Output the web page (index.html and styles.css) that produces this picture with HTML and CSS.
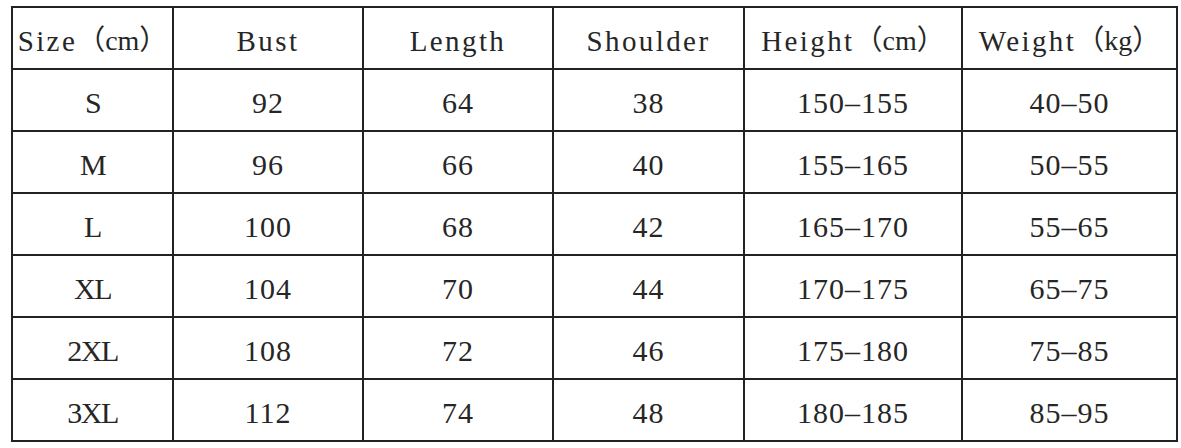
FILE: index.html
```html
<!DOCTYPE html>
<html>
<head>
<meta charset="utf-8">
<link rel="stylesheet" href="styles.css">
</head>
<body>
<table class="chart">
  <colgroup>
    <col class="c1"><col class="c2"><col class="c3"><col class="c4"><col class="c5"><col class="c6">
  </colgroup>
  <thead>
    <tr class="head">
      <th>Size<span class="fw">（cm）</span></th><th>Bust</th><th>Length</th><th>Shoulder</th><th>Height<span class="fw">（cm）</span></th><th>Weight<span class="fw">（kg）</span></th>
    </tr>
  </thead>
  <tbody>
    <tr><td class="size">S</td><td>92</td><td>64</td><td>38</td><td>150–155</td><td>40–50</td></tr>
    <tr><td class="size">M</td><td>96</td><td>66</td><td>40</td><td>155–165</td><td>50–55</td></tr>
    <tr><td class="size">L</td><td>100</td><td>68</td><td>42</td><td>165–170</td><td>55–65</td></tr>
    <tr><td class="size">XL</td><td>104</td><td>70</td><td>44</td><td>170–175</td><td>65–75</td></tr>
    <tr><td class="size">2XL</td><td>108</td><td>72</td><td>46</td><td>175–180</td><td>75–85</td></tr>
    <tr><td class="size">3XL</td><td>112</td><td>74</td><td>48</td><td>180–185</td><td>85–95</td></tr>
  </tbody>
</table>
</body>
</html>
```
FILE: styles.css
```css
html, body {
  margin: 0;
  padding: 0;
  background: #ffffff;
}
body {
  padding: 6px 0 0 11px;
}
.chart {
  border-collapse: collapse;
  table-layout: fixed;
  width: 1167px;
  border: 2px solid #222;
  color: #262626;
}
.c1 { width: 161px; }
.c2 { width: 190px; }
.c3 { width: 190px; }
.c4 { width: 191px; }
.c5 { width: 218px; }
.c6 { width: 215px; }
.chart th,
.chart td {
  border: 2px solid #222;
  text-align: center;
  vertical-align: middle;
  padding: 6px 0 0 0;
  height: 54px;
  line-height: 30px;
  white-space: nowrap;
  overflow: hidden;
}
.chart th {
  font-family: "Liberation Serif", "Noto Sans CJK SC", serif;
  font-weight: normal;
  font-size: 29px;
  letter-spacing: 2.4px;
}
.chart th .fw {
  font-family: "Liberation Serif", "Noto Sans CJK SC", serif;
  letter-spacing: 0;
  font-size: 28px;
  line-height: 30px;
  vertical-align: top;
}
.chart td {
  font-family: "Liberation Serif", serif;
  font-size: 30px;
  letter-spacing: 1px;
}
.chart td.size {
  letter-spacing: -1.5px;
}
```
